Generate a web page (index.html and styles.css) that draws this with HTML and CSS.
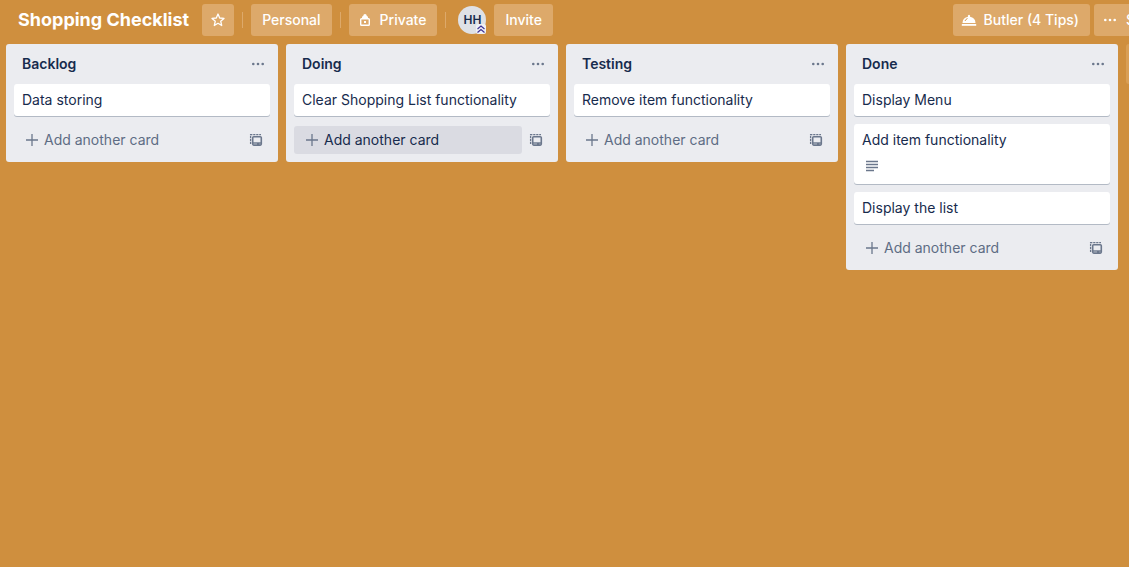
FILE: index.html
```html
<!DOCTYPE html>
<html lang="en">
<head>
<meta charset="utf-8">
<title>Shopping Checklist</title>
<link rel="stylesheet" href="styles.css">
</head>
<body>
<svg class="sprite" aria-hidden="true">
  <symbol id="dots" viewBox="0 0 16 16"><circle cx="3.3" cy="8" r="1.3"/><circle cx="8" cy="8" r="1.3"/><circle cx="12.7" cy="8" r="1.3"/></symbol>
  <symbol id="plus" viewBox="0 0 16 16"><path d="M8 2v12M2 8h12" fill="none" stroke="currentColor" stroke-width="1.3"/></symbol>
  <symbol id="template" viewBox="0 0 16 16"><g fill="none" stroke="currentColor"><path d="M2.600 12V2.600H13" stroke-width="1.300" stroke-dasharray="2.200 .8"/><rect x="4.700" y="4.700" width="8.600" height="8.400" rx="1" stroke-width="1.600"/><path d="M5 11h8" stroke-width="1.400"/></g><rect x="9" y="11" width="2.400" height="2"/></symbol>
</svg>
<header class="header">
  <h1 class="title">Shopping Checklist</h1>
  <button class="btn btn-icon" aria-label="Star board"><svg class="icon" viewBox="0 0 16 16"><path d="M8 2l1.700 4 4.300.4-3.300 2.800 1 4.300L8 11.300l-3.700 2.200 1-4.300L2 6.400 6.300 6z" fill="none" stroke="currentColor" stroke-width="1.300" stroke-linejoin="round"/></svg></button>
  <span class="divider"></span>
  <button class="btn">Personal</button>
  <span class="divider"></span>
  <button class="btn btn-lead"><svg class="icon" viewBox="0 0 16 16"><path d="M5 7V5.500C5 4.300 6 4 6.300 3.700a1.700 1.700 0 0 1 3.400 0C10 4 11 4.300 11 5.500V7z"/><rect x="3.700" y="6.700" width="8.600" height="6.600" rx=".8" fill="none" stroke="currentColor" stroke-width="1.400"/><rect x="7" y="9" width="2" height="2"/></svg>Private</button>
  <span class="divider"></span>
  <button class="avatar" aria-label="Member HH">HH<svg class="badge" viewBox="0 0 10 10" aria-hidden="true"><path d="M1.500 5L5 2l3.500 3M1.500 8.500L5 5.500l3.500 3" fill="none" stroke="currentColor" stroke-width="1.200"/></svg></button>
  <button class="btn">Invite</button>
  <div class="header-right">
    <button class="btn btn-butler"><svg class="icon" viewBox="0 0 16 16"><path d="M1.500 11a6.500 6.500 0 0 1 5.600-6.200 1.200 1.200 0 1 1 1.800 0A6.500 6.500 0 0 1 14.500 11z"/><path d="M.8 12h14.400v1.800H.8z"/><path d="M4 9a4.200 4.200 0 0 1 2.500-2.500" fill="none" stroke="#cf8f3e" stroke-width=".9"/></svg>Butler (4 Tips)</button>
    <button class="btn btn-menu"><svg class="icon"><use href="#dots"/></svg>Show Menu</button>
  </div>
</header>
<main class="board">
  <section class="list">
    <header class="list-head"><h2>Backlog</h2><button class="plain" aria-label="List actions"><svg class="icon"><use href="#dots"/></svg></button></header>
    <article class="card">Data storing</article>
    <footer class="list-foot"><button class="add"><svg class="icon"><use href="#plus"/></svg>Add another card</button><button class="plain" aria-label="Create from template"><svg class="icon"><use href="#template"/></svg></button></footer>
  </section>
  <section class="list">
    <header class="list-head"><h2>Doing</h2><button class="plain" aria-label="List actions"><svg class="icon"><use href="#dots"/></svg></button></header>
    <article class="card">Clear Shopping List functionality</article>
    <footer class="list-foot"><button class="add add-active"><svg class="icon"><use href="#plus"/></svg>Add another card</button><button class="plain" aria-label="Create from template"><svg class="icon"><use href="#template"/></svg></button></footer>
  </section>
  <section class="list">
    <header class="list-head"><h2>Testing</h2><button class="plain" aria-label="List actions"><svg class="icon"><use href="#dots"/></svg></button></header>
    <article class="card">Remove item functionality</article>
    <footer class="list-foot"><button class="add"><svg class="icon"><use href="#plus"/></svg>Add another card</button><button class="plain" aria-label="Create from template"><svg class="icon"><use href="#template"/></svg></button></footer>
  </section>
  <section class="list">
    <header class="list-head"><h2>Done</h2><button class="plain" aria-label="List actions"><svg class="icon"><use href="#dots"/></svg></button></header>
    <article class="card">Display Menu</article>
    <article class="card">Add item functionality
      <div class="card-badges"><svg class="icon" viewBox="0 0 16 16"><path d="M2 3.500h12M2 6.500h12M2 9.500h12M2 12.500h8" fill="none" stroke="currentColor" stroke-width="1.300"/></svg></div>
    </article>
    <article class="card">Display the list</article>
    <footer class="list-foot"><button class="add"><svg class="icon"><use href="#plus"/></svg>Add another card</button><button class="plain" aria-label="Create from template"><svg class="icon"><use href="#template"/></svg></button></footer>
  </section>
  <button class="add-list" aria-label="Add another list"></button>
</main>
</body>
</html>
```
FILE: styles.css
```css
* { box-sizing: border-box; }
body {
  margin: 0;
  min-height: 100vh;
  background: #cf8f3e;
  color: #172b4d;
  font: 14px/20px Inter, Roboto, sans-serif;
  overflow: hidden;
}
button { font: inherit; color: inherit; border: 0; background: none; padding: 0; cursor: pointer; }
.sprite { position: absolute; width: 0; height: 0; }
.icon { width: 16px; height: 16px; flex: none; fill: currentColor; }

.header { display: flex; align-items: center; gap: 8px; height: 40px; padding-left: 18px; color: #fff; white-space: nowrap; }
.title { margin: 0 5px 0 0; font-size: 18px; line-height: 32px; font-weight: 700; }
.btn { display: flex; align-items: center; height: 32px; padding: 0 11px; border-radius: 3px; background: #dda96a; font-weight: 500; }
.btn-icon { width: 32px; padding: 0 8px; }
.btn-lead, .btn-butler { gap: 7px; padding-left: 8px; }
.divider { width: 1px; height: 16px; background: #dda96a; }
.avatar { position: relative; width: 28px; height: 28px; margin-left: 4px; border-radius: 50%; background: #dfe1e6; color: #172b4d; font-size: 12px; font-weight: 600; }
.badge { position: absolute; right: 0; bottom: 0; width: 10px; height: 10px; border-radius: 2px; background: #eef0f6; color: #403294; }
.header-right { display: flex; gap: 4px; margin-left: auto; }
.btn-menu { width: 35px; gap: 8px; padding: 0 0 0 8px; border-radius: 3px 0 0 3px; overflow: hidden; }

.board { display: flex; align-items: flex-start; gap: 8px; padding: 4px 0 8px 6px; }
.list { flex: none; width: 272px; padding: 0 8px 8px; border-radius: 3px; background: #ebecf0; }
.list-head { display: flex; align-items: center; justify-content: space-between; height: 40px; padding: 0 4px 0 8px; }
.list-head h2 { margin: 0; font-size: 14px; line-height: 20px; font-weight: 600; }
.plain { display: flex; color: #6b778c; }
.card { margin-bottom: 8px; padding: 6px 8px; border-radius: 3px; background: #fff; box-shadow: 0 1px 0 #b3bac5; }
.card-badges { display: flex; padding: 8px 2px 4px; color: #6b778c; }
.list-foot { display: flex; align-items: center; gap: 6px; padding: 2px 6px 0 0; }
.add { display: flex; flex: 1; align-items: center; gap: 4px; height: 28px; padding: 0 10px; border-radius: 3px; color: #5e6c84; }
.add-active { background: #dadbe2; color: #172b4d; }
.add .icon { color: #6b778c; }
.add-list { flex: none; width: 272px; height: 40px; border-radius: 3px; background: #d99f56; }
```
